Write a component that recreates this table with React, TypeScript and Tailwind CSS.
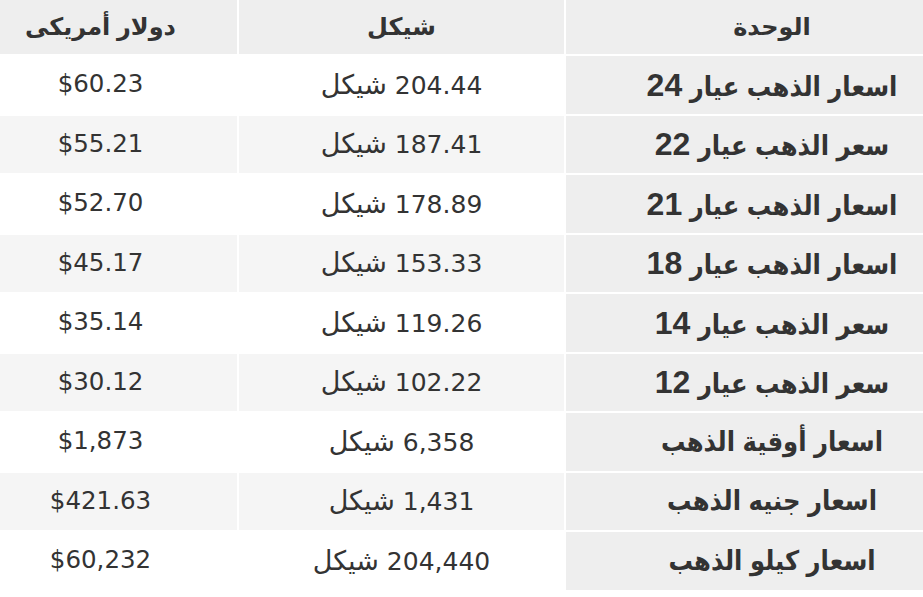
import React from "react";

const rows = [
  { ar: "اسعار الذهب عيار", num: "24", ils: "204.44", usd: "$60.23" },
  { ar: "سعر الذهب عيار", num: "22", ils: "187.41", usd: "$55.21" },
  { ar: "اسعار الذهب عيار", num: "21", ils: "178.89", usd: "$52.70" },
  { ar: "اسعار الذهب عيار", num: "18", ils: "153.33", usd: "$45.17" },
  { ar: "سعر الذهب عيار", num: "14", ils: "119.26", usd: "$35.14" },
  { ar: "سعر الذهب عيار", num: "12", ils: "102.22", usd: "$30.12" },
  { ar: "اسعار أوقية الذهب", num: "", ils: "6,358", usd: "$1,873" },
  { ar: "اسعار جنيه الذهب", num: "", ils: "1,431", usd: "$421.63" },
  { ar: "اسعار كيلو الذهب", num: "", ils: "204,440", usd: "$60,232" },
];

export default function App() {
  return (
    <div className="w-[923px] h-[597px] overflow-hidden bg-white text-[#333333]">
      <div className="w-[1014px] -ml-[36px] flex flex-col gap-[2px]">
        <div className="grid grid-cols-[273px_325px_412px] gap-[2px] h-[54px] font-bold text-[24px] [font-family:'Liberation_Sans','DejaVu_Sans',sans-serif]">
          <div className="bg-[#eeeeee] flex items-center justify-center" dir="rtl">دولار أمريكى</div>
          <div className="bg-[#eeeeee] flex items-center justify-center" dir="rtl">شيكل</div>
          <div className="bg-[#eeeeee] flex items-center justify-center" dir="rtl">الوحدة</div>
        </div>
        {rows.map((r, i) => {
          const bg = i % 2 === 0 ? "bg-white" : "bg-[#f5f5f5]";
          return (
            <div key={i} className="grid grid-cols-[273px_325px_412px] gap-[2px] h-[57.5px]">
              <div className={`${bg} flex items-center justify-center text-[24.5px] [font-family:'DejaVu_Sans',sans-serif]`} dir="ltr">
                {r.usd}
              </div>
              <div className={`${bg} flex items-center justify-center text-[25px] [font-family:'DejaVu_Sans',sans-serif]`} dir="rtl">
                <span>
                  {r.ils} <span className="text-[27px]">شيكل</span>
                </span>
              </div>
              <div
                className="bg-[#eeeeee] flex items-center justify-center font-bold text-[27px] [font-family:'Liberation_Sans','DejaVu_Sans_Condensed','DejaVu_Sans',sans-serif]"
                dir="rtl"
              >
                <span>
                  {r.ar}
                  {r.num && (
                    <>
                      {" "}
                      <span className="text-[32px]">{r.num}</span>
                    </>
                  )}
                </span>
              </div>
            </div>
          );
        })}
      </div>
    </div>
  );
}
